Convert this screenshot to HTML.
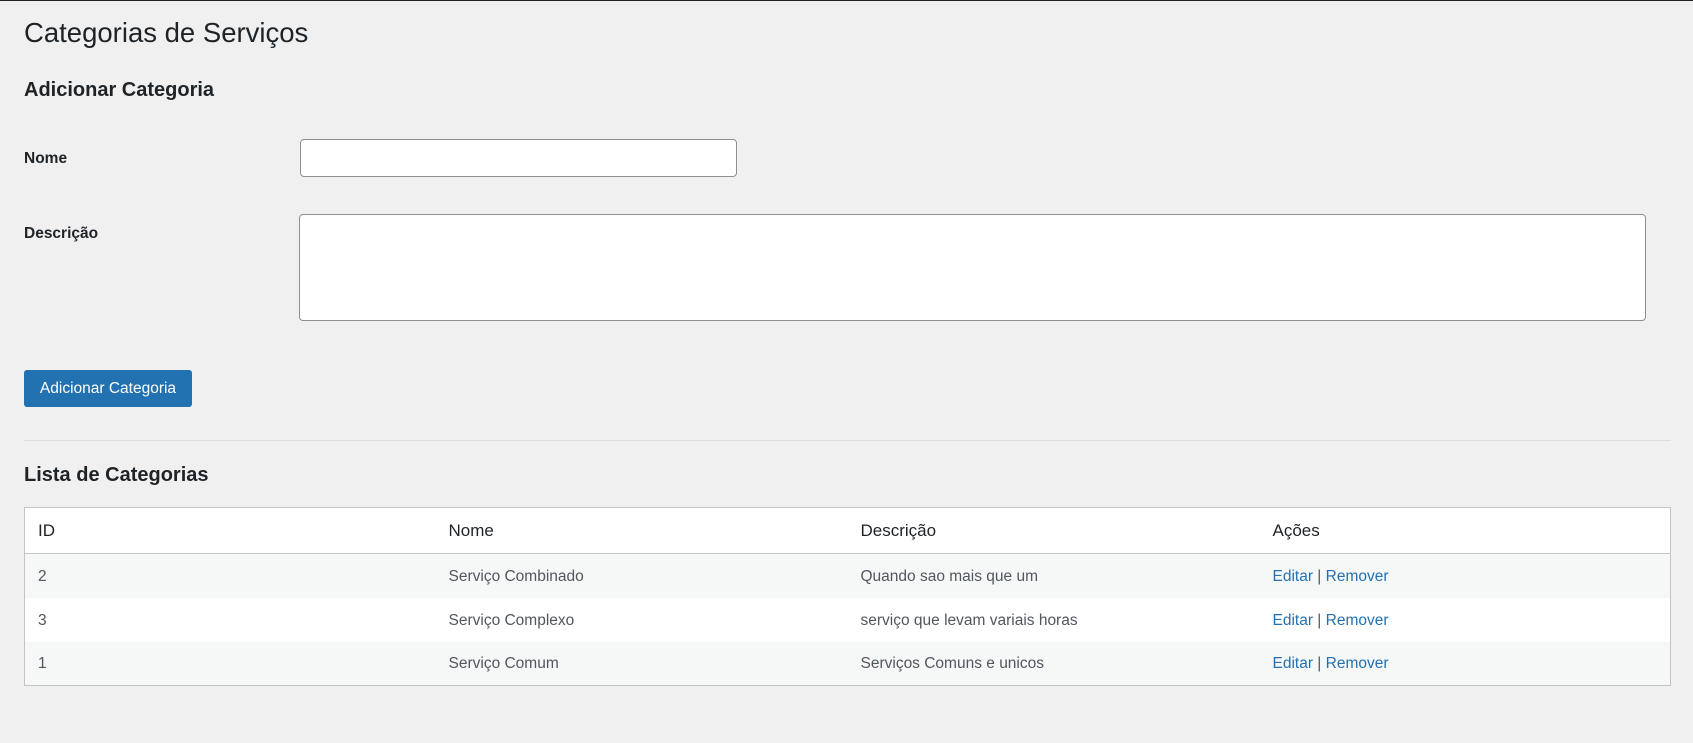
<!DOCTYPE html>
<html><head><meta charset="utf-8"><style>
*{box-sizing:border-box;margin:0;padding:0}
body{width:1693px;height:743px;background:#f0f0f1;font-family:"Liberation Sans",sans-serif;color:#1d2327;position:relative;overflow:hidden;border-top:1px solid #1d2327}
.a{position:absolute}
h1{position:absolute;left:24px;top:14px;font-size:27.5px;font-weight:400;line-height:36px}
h2{position:absolute;left:24px;font-size:20px;font-weight:600;line-height:26px}
.lbl{position:absolute;left:24px;font-size:15.5px;font-weight:600}
.inp{position:absolute;background:#fff;border:1px solid #8c8f94;border-radius:4px}
.btn{position:absolute;left:24px;top:369px;width:168px;height:37px;background:#2271b1;border-radius:3px;color:#fff;font-size:15.5px;line-height:37px;text-align:center}
table{position:absolute;left:24px;top:506px;width:1647px;border:1px solid #c3c4c7;border-collapse:collapse;font-size:15.5px;background:#fff}
th{font-weight:400;text-align:left;height:46px;font-size:17px;border-bottom:1px solid #c3c4c7;color:#1d2327}
td{height:44px;color:#50575e;padding-top:2px}
th,td{padding-left:13px}
tr.s td{background:#f6f7f7}
a{color:#2271b1;text-decoration:none}
</style></head><body>
<h1>Categorias de Serviços</h1>
<h2 style="top:76px">Adicionar Categoria</h2>
<div class="lbl" style="top:149px">Nome</div>
<div class="inp" style="left:300px;top:138px;width:437px;height:38px"></div>
<div class="lbl" style="top:224px">Descrição</div>
<div class="inp" style="left:299px;top:213px;width:1347px;height:107px"></div>
<div class="btn">Adicionar Categoria</div>
<div class="a" style="left:24px;top:439px;width:1647px;height:1px;background:#dcdcde"></div>
<h2 style="top:461px">Lista de Categorias</h2>
<table>
<tr><th style="width:411px">ID</th><th style="width:412px">Nome</th><th style="width:412px">Descrição</th><th>Ações</th></tr>
<tr class="s"><td>2</td><td>Serviço Combinado</td><td>Quando sao mais que um</td><td><a>Editar</a> | <a>Remover</a></td></tr>
<tr><td>3</td><td>Serviço Complexo</td><td>serviço que levam variais horas</td><td><a>Editar</a> | <a>Remover</a></td></tr>
<tr class="s"><td>1</td><td>Serviço Comum</td><td>Serviços Comuns e unicos</td><td><a>Editar</a> | <a>Remover</a></td></tr>
</table>
</body></html>
